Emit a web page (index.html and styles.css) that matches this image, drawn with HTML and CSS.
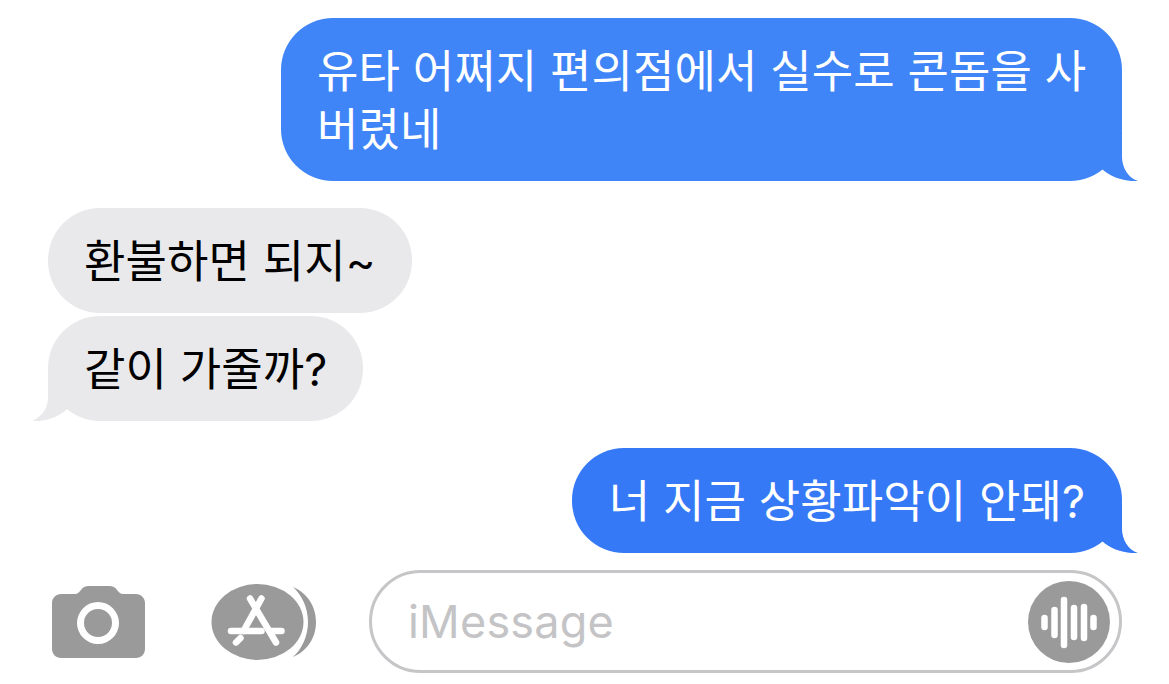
FILE: index.html
```html
<!DOCTYPE html>
<html lang="ko">
<head>
    <meta charset="UTF-8">
    <title>iMessage</title>
    <link rel="stylesheet" href="styles.css">
</head>
<body>
<div class="thread">
    <div class="bubble sent first">
        유타 어쩌지 편의점에서 실수로 콘돔을 사 버렸네
        <svg class="tail tail-sent" width="40" height="50" viewBox="0 0 40 50"><path d="M24 0V26C24 36 30 47 40 50C30 51 13 47 4 38L0 20Z"/></svg>
    </div>
    <div class="bubble received gap-big">환불하면 되지~</div>
    <div class="bubble received gap-small">
        같이 가줄까?
        <svg class="tail tail-received" width="40" height="50" viewBox="0 0 40 50"><path d="M15 0V25C15 35 12 43 0 50C10 51 25 47 34 38L40 20Z"/></svg>
    </div>
    <div class="bubble sent last gap-big">
        너 지금 상황파악이 안돼?
        <svg class="tail tail-sent" width="40" height="50" viewBox="0 0 40 50"><path d="M24 0V26C24 36 30 47 40 50C30 51 13 47 4 38L0 20Z"/></svg>
    </div>
</div>

<div class="composer">
    <svg class="camera" width="93" height="72" viewBox="0 0 93 72">
        <path fill-rule="evenodd" d="M9 8H23C26 8 27 6 29 4C31 1 33 0 37 0H57C61 0 63 1 65 4C67 6 68 8 71 8H84C89 8 93 12 93 17V63C93 68 89 72 84 72H9C4 72 0 68 0 63V17C0 12 4 8 9 8ZM46 16A21 21 0 1 0 46 58A21 21 0 1 0 46 16ZM46 23A14 14 0 1 1 46 51A14 14 0 1 1 46 23Z"/>
    </svg>
    <svg class="apps" width="106" height="76" viewBox="0 0 106 76">
        <path d="M82 3C96 9 105 22 105 38C105 54 96 67 82 73C91 65 97 52 97 38C97 24 91 11 82 3Z"/>
        <ellipse cx="46.500" cy="38" rx="46" ry="38"/>
        <g class="apps-glyph">
            <path d="M39 14.500L65 58.500"/>
            <path d="M50.500 14.500L32.500 47"/>
            <path d="M29.500 54L25 58.500"/>
            <path d="M20 47H50.500"/>
            <path d="M60 47H70.500"/>
        </g>
    </svg>
    <div class="field">
        <span class="placeholder">iMessage</span>
        <svg class="mic" width="82" height="82" viewBox="0 0 82 82">
            <circle cx="41" cy="41" r="41"/>
            <g class="mic-bars">
                <path d="M16.500 37V46"/>
                <path d="M26.500 29V54"/>
                <path d="M36 19V64"/>
                <path d="M46 27V56"/>
                <path d="M56 26V57"/>
                <path d="M65.500 37V46"/>
            </g>
        </svg>
    </div>
</div>
</body>
</html>
```
FILE: styles.css
```css
body {
    margin: 0;
    height: 684px;
    overflow: hidden;
    background-color: #fff;
    font-family: "Inter", "Noto Sans CJK KR", sans-serif;
}

.thread {
    display: flex;
    flex-direction: column;
    padding: 18px 47px 0 48px;
}

.bubble {
    position: relative;
    box-sizing: border-box;
    max-width: 841px;
    padding: 24.500px 36px 22.500px;
    border-radius: 52px;
    font-size: 45px;
    line-height: 58px;
    letter-spacing: 0.100px;
}

.sent {
    align-self: flex-end;
    color: #fff;
}

.first {
    padding-right: 28px;
    background-color: #3f85f7;
    fill: #3f85f7;
}

.last {
    padding-right: 37px;
    padding-left: 37px;
    background-color: #3579f6;
    fill: #3579f6;
}

.received {
    align-self: flex-start;
    background-color: #e9e9eb;
    color: #000;
    fill: #e9e9eb;
}

.gap-big {
    margin-top: 27px;
}

.gap-small {
    margin-top: 3px;
}

.tail {
    position: absolute;
    bottom: 0;
    display: block;
}

.tail-sent {
    right: -16px;
}

.tail-received {
    left: -15px;
}

.composer {
    display: flex;
    align-items: center;
    margin-top: 17px;
    padding: 0 47px 0 52px;
}

.camera {
    flex: none;
    fill: #9a9a9a;
}

.apps {
    flex: none;
    margin-left: 66px;
    fill: #9a9a9a;
}

.apps-glyph {
    fill: none;
    stroke: #fff;
    stroke-width: 6.500;
    stroke-linecap: round;
}

.field {
    flex: 1;
    display: flex;
    align-items: center;
    justify-content: space-between;
    box-sizing: border-box;
    height: 103px;
    margin-left: 52px;
    padding: 0 9px 0 36px;
    border: 3px solid #c6c6c8;
    border-radius: 52px;
}

.placeholder {
    color: #c4c4c6;
    font-size: 45px;
    letter-spacing: 0.200px;
}

.mic {
    flex: none;
    fill: #9a9a9a;
}

.mic-bars {
    fill: none;
    stroke: #fff;
    stroke-width: 6.500;
    stroke-linecap: round;
}
```
